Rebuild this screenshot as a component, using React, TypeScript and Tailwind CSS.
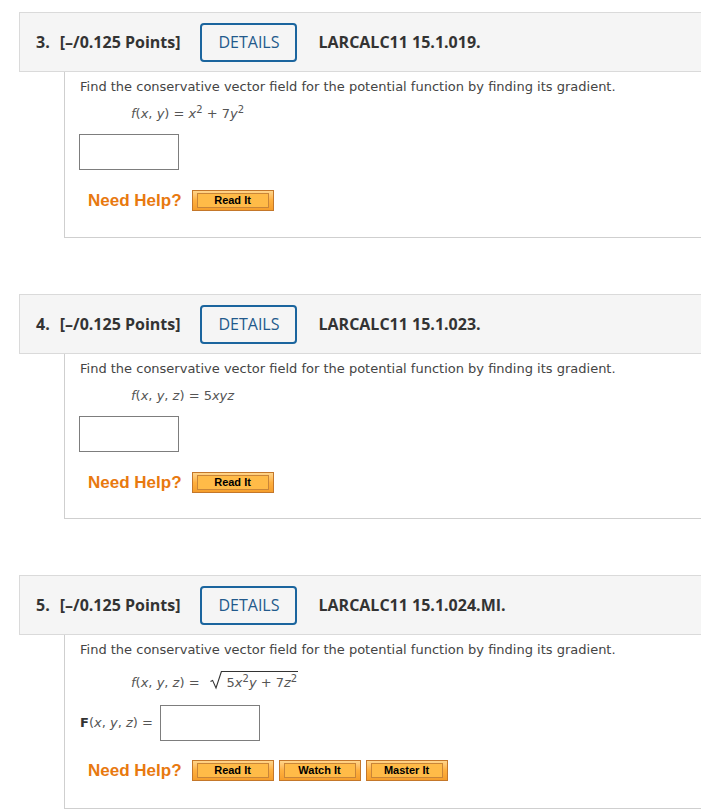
import React from "react";

const BTN_FONT = { fontFamily: '"Liberation Sans", Arial, sans-serif' };

function HelpBtn({ label }: { label: string }) {
  return (
    <div className="w-[82px] h-[21px] border border-[#c4772a] bg-gradient-to-b from-[#ffd58a] via-[#ffb03e] to-[#f59e2c] px-[4px] py-[2px]">
      <div
        className="h-full border border-[#c98538] bg-[#ffbb48] flex items-center justify-center text-[11px] font-bold text-black leading-none"
        style={BTN_FONT}
      >
        {label}
      </div>
    </div>
  );
}

function Header({ num, code }: { num: string; code: string }) {
  return (
    <div className="ml-[19px] h-[60px] bg-[#f5f5f5] border border-r-0 border-[#dadada] flex items-center font-['Open_Sans',sans-serif] text-[#333]">
      <span className="ml-[16px] font-bold text-[16px]">{num}.</span>
      <span className="ml-[10px] font-bold text-[16px]">[–/0.125 Points]</span>
      <div className="ml-[20px] w-[97px] h-[39px] border-2 border-[#1b659e] rounded-[4px] flex items-center justify-center text-[16px] text-[#235a8c]">
        DETAILS
      </div>
      <span className="ml-[21px] font-bold text-[16px]">{code}</span>
    </div>
  );
}

function I({ children }: { children: React.ReactNode }) {
  return <i className="italic">{children}</i>;
}

function Sup({ children, high }: { children: React.ReactNode; high?: boolean }) {
  return (
    <sup className={high ? "text-[10px] relative top-[-5.5px] not-italic" : "text-[10px] relative top-[-5px] not-italic"}>
      {children}
    </sup>
  );
}

function NeedHelp({ buttons }: { buttons: string[] }) {
  return (
    <div className="flex items-center ml-[8px]">
      <span
        className="text-[17px] font-bold text-[#e8790f] mr-[10px]"
        style={BTN_FONT}
      >
        Need Help?
      </span>
      <div className="flex gap-[5px]">
        {buttons.map((b) => (
          <HelpBtn key={b} label={b} />
        ))}
      </div>
    </div>
  );
}

const BODY = "font-['DejaVu_Sans',Verdana,sans-serif] text-[13px] text-[#444]";

function Prompt() {
  return (
    <div className="leading-[16px] h-[16px]">
      Find the conservative vector field for the potential function by finding its gradient.
    </div>
  );
}

function Radical() {
  return (
    <svg width="12" height="22" viewBox="0 0 12 22" className="block">
      <path d="M0.5 10.5 L2.6 9.4 L6 17 L11.4 0.5 L12 0.5" fill="none" stroke="#333" strokeWidth="1.1" />
    </svg>
  );
}

export default function App() {
  return (
    <div className="w-[701px] h-[811px] bg-white pt-[12px] overflow-hidden">
      {/* Question 3 */}
      <Header num="3" code="LARCALC11 15.1.019." />
      <div className={`ml-[64px] border-l border-b border-[#cfcfcf] pl-[15px] h-[166px] pt-[7px] ${BODY}`}>
        <Prompt />
        <div className="ml-[51px] mt-[9px] h-[20px] leading-[20px] text-[#555]">
          <I>f</I>(<I>x</I>, <I>y</I>) = <I>x</I>
          <Sup>2</Sup> + 7<I>y</I>
          <Sup>2</Sup>
        </div>
        <div className="mt-[10px] -ml-[1px] w-[100px] h-[36px] border border-[#7d7d7d] bg-white" />
        <div className="mt-[18px]">
          <NeedHelp buttons={["Read It"]} />
        </div>
      </div>

      {/* Question 4 */}
      <div className="mt-[56px]">
        <Header num="4" code="LARCALC11 15.1.023." />
        <div className={`ml-[64px] border-l border-b border-[#cfcfcf] pl-[15px] h-[165px] pt-[7px] ${BODY}`}>
          <Prompt />
          <div className="ml-[51px] mt-[9px] h-[20px] leading-[20px] text-[#555]">
            <I>f</I>(<I>x</I>, <I>y</I>, <I>z</I>) = 5<I>xyz</I>
          </div>
          <div className="mt-[10px] -ml-[1px] w-[100px] h-[36px] border border-[#7d7d7d] bg-white" />
          <div className="mt-[18px]">
            <NeedHelp buttons={["Read It"]} />
          </div>
        </div>
      </div>

      {/* Question 5 */}
      <div className="mt-[56px]">
        <Header num="5" code="LARCALC11 15.1.024.MI." />
        <div className={`ml-[64px] border-l border-b border-[#cfcfcf] pl-[15px] h-[174px] pt-[7px] ${BODY}`}>
          <Prompt />
          <div className="ml-[51px] mt-[8px] h-[27px] flex items-end text-[#555]">
            <span className="leading-[21px] mr-[10px]">
              <I>f</I>(<I>x</I>, <I>y</I>, <I>z</I>) =
            </span>
            <Radical />
            <span className="border-t-[1.1px] border-[#333] leading-[21px] pl-[5px] pr-[1px]">
              5<I>x</I>
              <Sup high>2</Sup>
              <I>y</I> + 7<I>z</I>
              <Sup high>2</Sup>
            </span>
          </div>
          <div className="mt-[12px] flex items-center">
            <span className="text-[#555]">
              <b className="font-bold text-[#333]">F</b>(<I>x</I>, <I>y</I>, <I>z</I>) =
            </span>
            <div className="ml-[7px] w-[100px] h-[36px] border border-[#7d7d7d] bg-white" />
          </div>
          <div className="mt-[17px]">
            <NeedHelp buttons={["Read It", "Watch It", "Master It"]} />
          </div>
        </div>
      </div>
    </div>
  );
}
